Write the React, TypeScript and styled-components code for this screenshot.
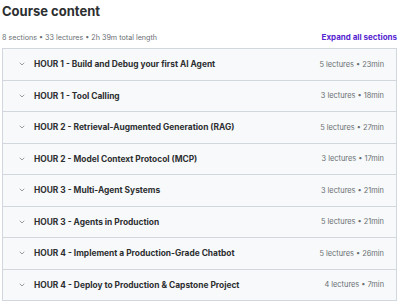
import styled, { createGlobalStyle } from "styled-components";
import { ChevronDown } from "lucide-react";

const GlobalStyle = createGlobalStyle`
  html, body {
    margin: 0;
    padding: 0;
    background: #ffffff;
  }
  body {
    font-family: "Inter", "Noto Sans", sans-serif;
    color: #2d2f31;
  }
`;

const Wrapper = styled.section`
  padding: 0 3px 0 2px;
`;

const Title = styled.h2`
  margin: 0;
  padding-top: 3px;
  height: 26px;
  box-sizing: border-box;
  font-size: 13px;
  line-height: 17px;
  font-weight: 700;
`;

const MetaRow = styled.div`
  display: flex;
  align-items: center;
  justify-content: space-between;
  height: 22px;
`;

const Meta = styled.span`
  font-size: 7.2px;
  color: #6a6f73;
`;

const ExpandLink = styled.a`
  font-size: 8px;
  font-weight: 700;
  color: #5624d0;
  text-decoration: none;
`;

const SectionList = styled.ul`
  list-style: none;
  margin: 0;
  padding: 0;
  height: 253px;
  display: flex;
  flex-direction: column;
  border: 1px solid #d1d7dc;
  box-sizing: border-box;
`;

const Section = styled.li`
  flex: 1;
  display: flex;
  align-items: center;
  padding: 0 12px 0 15px;
  background: #f7f9fa;
  border-top: 1px solid #d1d7dc;

  &:first-child {
    border-top: none;
  }
`;

const Chevron = styled.span`
  display: flex;
  color: #6a6f73;
  margin-right: 8px;
`;

const SectionTitle = styled.span`
  flex: 1;
  font-size: 8.4px;
  font-weight: 700;
  color: #2d2f31;
`;

const SectionInfo = styled.span`
  font-size: 7.4px;
  color: #6a6f73;
`;

const sections = [
  { title: "HOUR 1 - Build and Debug your first AI Agent", lectures: 5, length: "23min" },
  { title: "HOUR 1 - Tool Calling", lectures: 3, length: "18min" },
  { title: "HOUR 2 - Retrieval-Augmented Generation (RAG)", lectures: 5, length: "27min" },
  { title: "HOUR 2 - Model Context Protocol (MCP)", lectures: 3, length: "17min" },
  { title: "HOUR 3 - Multi-Agent Systems", lectures: 3, length: "21min" },
  { title: "HOUR 3 - Agents in Production", lectures: 5, length: "21min" },
  { title: "HOUR 4 - Implement a Production-Grade Chatbot", lectures: 5, length: "26min" },
  { title: "HOUR 4 - Deploy to Production & Capstone Project", lectures: 4, length: "7min" },
];

function App() {
  return (
    <>
      <GlobalStyle />
      <Wrapper>
        <Title>Course content</Title>
        <MetaRow>
          <Meta>8 sections • 33 lectures • 2h 39m total length</Meta>
          <ExpandLink href="#">Expand all sections</ExpandLink>
        </MetaRow>
        <SectionList>
          {sections.map((s) => (
            <Section key={s.title}>
              <Chevron>
                <ChevronDown size={8} strokeWidth={2} />
              </Chevron>
              <SectionTitle>{s.title}</SectionTitle>
              <SectionInfo>
                {s.lectures} lectures • {s.length}
              </SectionInfo>
            </Section>
          ))}
        </SectionList>
      </Wrapper>
    </>
  );
}

export default App;
